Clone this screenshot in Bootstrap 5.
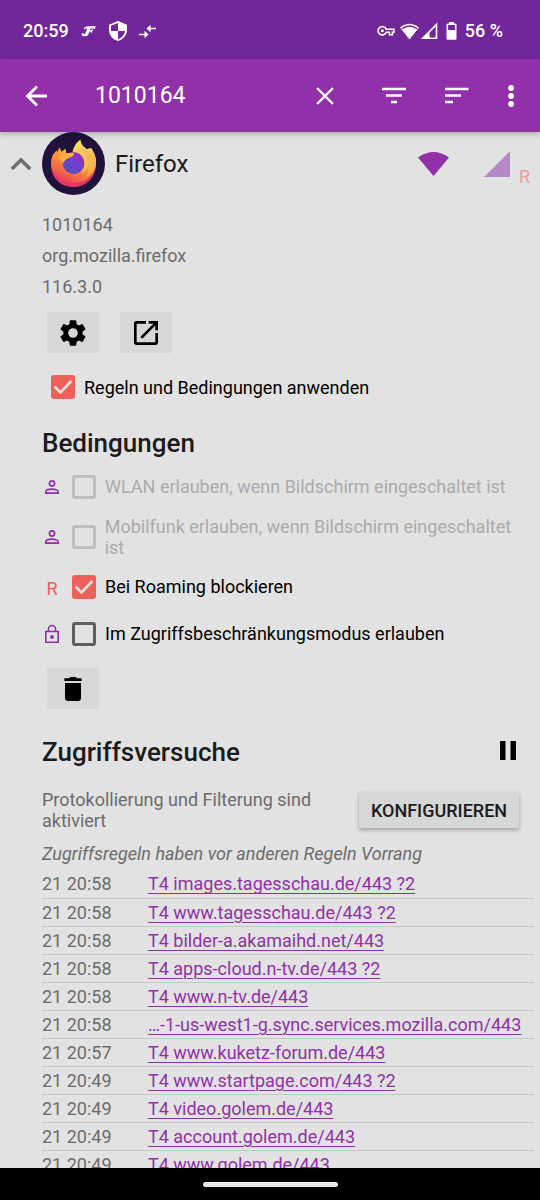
<!DOCTYPE html>
<html lang="de">
<head>
<meta charset="utf-8">
<meta name="viewport" content="width=device-width, initial-scale=1">
<title>Firefox – Regeln</title>
<link href="https://cdn.jsdelivr.net/npm/bootstrap@5.3.0/dist/css/bootstrap.min.css" rel="stylesheet">
<style>
  :root { --plum: #9130a8; --plum-dark: #71269a; --coral: #ee6059; --ground: #e2e2e2; --muted: #6c6c6c; }
  body { font-family: Roboto, sans-serif; font-size: 18px; line-height: 21px; background: var(--ground); color: #000; }
  svg { display: block; flex: none; }
  .status { height: 59px; background: var(--plum-dark); font-weight: 500; padding: 2px 37px 0 23px; }
  .status-left { gap: 12px; }
  .appbar { height: 73px; background: var(--plum); box-shadow: 0 2px 6px rgba(0,0,0,.25); padding: 0 23px 0 24px; z-index: 1; }
  .appbar button, .plain { background: none; border: 0; padding: 0; color: inherit; }
  .actions { gap: 39px; margin-right: -1px; }
  .actions button:first-child { margin-right: 8px; }
  .search { flex: 1 1 0; min-width: 0; background: none; border: 0; padding: 0; margin-left: 46px; color: #fff; font-size: 23px; outline: 0; }
  .page { min-height: 0; }
  .app-row { height: 63px; padding: 0 10px; }
  .app-name { font-size: 24px; line-height: 30px; color: #1b1b1b; }
  .app-title { gap: 10px; }
  .networks { gap: 34px; }
  .details { padding: 0 6px 0 42px; }
  .facts { color: var(--muted); line-height: 31px; margin: 14px 0 10px; }
  .tool { width: 52px; height: 41px; border: 0; padding: 0; border-radius: 2px; background: #d6d8d7; display: grid; place-items: center; }
  .tools { gap: 21px; padding-left: 5px; }
  .apply-row { padding: 22px 0 28px 9px; }
  .section-title { font-size: 26px; line-height: 32px; font-weight: 500; color: #1b1b1b; margin: 0; }
  .rules { padding: 4px 6px 11px 0; }
  .rule { min-height: 47px; }
  .rule-tall { min-height: 53px; }
  .rule-icon { width: 20px; margin-right: 10px; display: grid; place-items: center; }
  .tick { appearance: none; flex: none; width: 24px; height: 24px; margin: 0; border: 3px solid #5e5e5e; border-radius: 3px; }
  .tick:checked { border: 0; background: var(--coral) url("data:image/svg+xml,%3Csvg xmlns='http://www.w3.org/2000/svg' viewBox='0 0 24 24'%3E%3Cpath d='M3.500 11.500l6 6L20.500 6' fill='none' stroke='%23e8e2e2' stroke-width='2.600'/%3E%3C/svg%3E"); }
  .tick:disabled { border-color: #bdbdbd; }
  .tick:disabled + label { color: #ababab; }
  .tick + label { margin-left: 9px; }
  .coral { color: var(--coral); }
  .attempts-head { padding: 27px 17px 21px 0; }
  .attempts-head button { margin-bottom: 4px; }
  .attempts-info { padding-right: 15px; }
  .configure { width: 160px; height: 36px; border: 0; padding: 0; border-radius: 2px; background: #d6d8d7; color: #1b1b1b; font-weight: 500; box-shadow: 0 2px 4px rgba(0,0,0,.3); }
  .note { color: var(--muted); }
  .precedence { margin: 12px 0 6px; }
  .log { width: 100%; table-layout: fixed; color: var(--muted); }
  .log td { padding: 0; height: 28px; line-height: 27px; border-bottom: 1px solid #c5c5c5; white-space: nowrap; }
  .log td:first-child { width: 106px; }
  .log a { color: var(--plum); text-decoration-thickness: 1px; text-underline-offset: 3px; }
  .gesture { height: 32px; background: #000; z-index: 1; }
  .gesture span { width: 25%; height: 5px; background: #e8e8e8; border-radius: 3px; }
</style>
</head>
<body>
<div class="d-flex flex-column vh-100 overflow-hidden">
  <div class="status d-flex align-items-center text-white flex-shrink-0">
    <div class="status-left d-flex align-items-center">
      <span>20:59</span>
      <svg width="16" height="12" viewBox="0 0 20 14" aria-hidden="true"><path d="M3.500 4.500C4 2 6 1 9 1h9.500l-1.200 3.800-1.500-1h-4L11 6h1.500l1-1.200H15l-1.500 4.400H12V8h-1.500l-1 2.700C8.800 12.600 7 13.500 4.500 13.500 2 13.500.8 12.600.8 11.300c0-1 .8-1.600 1.700-1.600.9 0 1.500.5 1.500 1.300 1 0 1.400-.6 1.700-1.500L7.700 3.800H6c-.8 0-1.200.6-1.500 1.400z" fill="#fff"/></svg>
      <svg width="18" height="20" viewBox="3 1 18 22" preserveAspectRatio="none" aria-hidden="true"><path d="M12 1L3 5v6c0 5.550 3.840 10.740 9 12 5.160-1.260 9-6.450 9-12V5zm0 10.990h7c-.53 4.120-3.280 7.790-7 8.940V12H5V6.300l7-3.110z" fill="#fff"/></svg>
      <svg width="18" height="14" viewBox="4 2 18 14" aria-hidden="true"><path d="M4 12.500h7M14 6.500h7" stroke="#fff" stroke-width="1.600"/><path d="M9.500 8.800l4 3.700-4 3.700zM15.500 2.800l-4 3.700 4 3.700z" fill="#fff"/></svg>
    </div>
    <svg class="ms-auto" width="18" height="12" viewBox="0 0 18 12" aria-hidden="true"><path d="M9.200 4.200h7.700v3h-1.500v2.600h-3V7.200H9.200A4.200 4.200 0 1 1 9.200 4.200z" fill="none" stroke="#fff" stroke-width="1.600"/><circle cx="5.400" cy="5.700" r="1.500" fill="#fff"/></svg>
    <svg class="ms-1" width="21" height="18" viewBox="0 0 21 18" aria-hidden="true"><path d="M1 5.500Q10.500-2 20 5.500L10.500 17.500z" fill="#fff"/><path d="M2.800 6.800q7.700-5.600 15.400 0" stroke="#71269a" stroke-width="1.300" fill="none"/></svg>
    <svg width="18" height="18" viewBox="0 0 18 18" aria-hidden="true"><path d="M16.500 2.500v13.700H2.800z" fill="none" stroke="#fff" stroke-width="1.600"/><path d="M9.500 9.500v7H2z" fill="#fff"/></svg>
    <svg class="ms-2 me-2" width="11" height="18" viewBox="0 0 11 18" aria-hidden="true"><path d="M3 0h5v2H3z" fill="#fff"/><rect x="1.300" y="2.300" width="8.400" height="14.700" rx=".5" fill="none" stroke="#fff" stroke-width="1.600"/><path d="M1 8h9v9H1z" fill="#fff"/></svg>
    <span>56 %</span>
  </div>

  <header class="appbar d-flex align-items-center text-white flex-shrink-0 position-relative">
    <button type="button" aria-label="Zurück"><svg width="25" height="24" viewBox="0 0 25 24"><path d="M23 12H4M13 2.500L3.500 12l9.500 9.500" fill="none" stroke="#fff" stroke-width="2.800"/></svg></button>
    <input class="search" type="text" value="1010164" aria-label="Suche">
    <div class="actions d-flex align-items-center">
      <button type="button" aria-label="Suche leeren"><svg width="20" height="20" viewBox="0 0 20 20"><path d="M2 2l16 16M18 2L2 18" stroke="#fff" stroke-width="2.400"/></svg></button>
      <button type="button" aria-label="Filtern"><svg width="24" height="18" viewBox="0 0 24 18"><path d="M0 2h24M4 8.500h16M9 15h6" stroke="#fff" stroke-width="2.600"/></svg></button>
      <button type="button" aria-label="Sortieren"><svg width="24" height="18" viewBox="0 0 24 18"><path d="M0 2h23.500M0 8.500h16M0 15h8" stroke="#fff" stroke-width="2.600"/></svg></button>
      <button type="button" class="pe-1" aria-label="Mehr"><svg width="6" height="22" viewBox="3 0 6 22"><g fill="#fff"><circle cx="6" cy="3" r="2.900"/><circle cx="6" cy="11" r="2.900"/><circle cx="6" cy="19" r="2.900"/></g></svg></button>
    </div>
  </header>

  <main class="page flex-fill overflow-hidden">
    <div class="app-row d-flex align-items-center">
      <div class="app-title d-flex align-items-center me-auto">
        <button type="button" class="plain" aria-label="Einklappen"><svg width="22" height="14" viewBox="0 0 22 14"><path d="M1.800 12L11 3l9.200 9" fill="none" stroke="#6e6e6e" stroke-width="3.400"/></svg></button>
        <svg width="63" height="63" viewBox="0 0 63 63" role="img" aria-label="Firefox-Logo">
          <defs>
            <linearGradient id="flame" x1=".9" y1=".1" x2=".35" y2="1"><stop offset="0" stop-color="#ffd84d"/><stop offset=".4" stop-color="#fba23c"/><stop offset=".75" stop-color="#f56b3f"/><stop offset="1" stop-color="#ea3f5c"/></linearGradient>
            <linearGradient id="tail" x1=".3" y1="0" x2=".7" y2="1"><stop offset="0" stop-color="#ffe95a"/><stop offset=".3" stop-color="#f1c36a"/><stop offset="1" stop-color="#fda63f"/></linearGradient>
            <linearGradient id="globe" x1=".9" y1=".1" x2=".2" y2=".9"><stop offset="0" stop-color="#a028bd"/><stop offset=".5" stop-color="#6f3fce"/><stop offset="1" stop-color="#5350c0"/></linearGradient>
          </defs>
          <circle cx="31.500" cy="31.500" r="31.500" fill="#20123a"/>
          <path d="M9 32c0-6 2-10 6-13.500V21l2.500-5.500 2 4.500 4-3.200.7 4.200H31l18-5c3.500 5 5 9 5 16 0 13-9.500 23-22.500 23S9 46 9 32z" fill="#e53467"/>
          <path d="M9 31c0-5.500 2-9.500 6-12.500V21l2.500-5.500 2 4.500 4-3.200.7 4.200H31l18-5c3.500 5 5 9 5 14 0 12-9.500 21-22.500 21S9 42 9 31z" fill="url(#flame)"/>
          <path d="M30.500 20.500c1-6 4-10 8-13 .5 4.500 2 6 5 8.500 2 1.500 3.500 3.500 5 5.500v-5.500c3.500 4 5.500 9 5.500 14 0 7-3.500 12-9.500 15 3-7 2-15-3-20-3-3-7-4-11-4.500z" fill="url(#tail)"/>
          <circle cx="31.500" cy="31" r="10.800" fill="url(#globe)"/>
          <path d="M16 26c3-3 5-2 8-4 2.500-1.500 6-1.500 8-1 0 2-1 3.500-4 4.500-3.500 1-6 3-6.500 6-1-3-3-4.500-5.500-5.500z" fill="#fdb040"/>
          <path d="M38 22c6 5 7 13 1 19 7-2 9-10 5-15-1-2-3-3.500-6-4z" fill="#fdc448"/>
        </svg>
        <span class="app-name">Firefox</span>
      </div>
      <div class="networks d-flex align-items-center">
        <svg width="31" height="26" viewBox="0 0 31 26" role="img" aria-label="WLAN"><path d="M0 6.500Q15.500-4.500 31 6.500L15.500 25z" fill="#9130a8"/></svg>
        <svg width="28" height="28" viewBox="0 0 28 28" role="img" aria-label="Mobilfunk"><path d="M27 1v26H1z" fill="#b587c8"/></svg>
      </div>
      <span class="coral opacity-50 align-self-end pb-2 ms-2">R</span>
    </div>

    <div class="details">
      <div class="facts"><div>1010164</div><div>org.mozilla.firefox</div><div>116.3.0</div></div>
      <div class="tools d-flex">
        <button type="button" class="tool" aria-label="Einstellungen"><svg width="32" height="32" viewBox="0 0 24 24"><path d="M19.140 12.940c.04-.3.060-.61.060-.94 0-.32-.02-.64-.07-.94l2.030-1.580a.49.49 0 0 0 .12-.61l-1.920-3.320a.49.49 0 0 0-.59-.22l-2.390.96c-.5-.38-1.030-.7-1.620-.94l-.36-2.540a.48.48 0 0 0-.48-.41h-3.840c-.24 0-.43.17-.47.41l-.36 2.540c-.59.24-1.130.57-1.620.94l-2.390-.96a.48.48 0 0 0-.59.22L2.740 8.870c-.12.21-.08.470.12.610l2.030 1.580c-.05.3-.09.63-.09.94s.02.640.07.940l-2.030 1.580a.49.49 0 0 0-.12.610l1.920 3.320c.12.220.37.290.59.220l2.390-.96c.5.380 1.030.7 1.620.94l.36 2.540c.05.240.24.410.48.410h3.840c.24 0 .44-.17.470-.41l.36-2.540c.59-.24 1.130-.56 1.620-.94l2.390.96c.22.080.47 0 .59-.22l1.920-3.320a.48.480 0 0 0-.12-.61zM12 15.600A3.600 3.600 0 1 1 12 8.400a3.600 3.600 0 0 1 0 7.200z"/></svg></button>
        <button type="button" class="tool" aria-label="App öffnen"><svg width="32" height="32" viewBox="0 0 24 24"><path d="M19 19H5V5h7V3H5a2 2 0 0 0-2 2v14a2 2 0 0 0 2 2h14c1.100 0 2-.9 2-2v-7h-2zM14 3v2h3.590l-9.830 9.830 1.410 1.410L19 6.410V10h2V3z"/></svg></button>
      </div>
      <div class="apply-row d-flex align-items-center">
        <input class="tick" type="checkbox" id="apply" checked><label for="apply">Regeln und Bedingungen anwenden</label>
      </div>

      <h2 class="section-title">Bedingungen</h2>
      <div class="rules">
        <div class="rule d-flex align-items-center">
          <span class="rule-icon"><svg width="16" height="16" viewBox="0 0 16 16"><circle cx="8" cy="4.500" r="2.600" fill="none" stroke="#9130a8" stroke-width="1.700"/><path d="M1.800 14.200v-1.500C1.800 11 5.500 10.200 8 10.200s6.200.8 6.200 2.500v1.500z" fill="none" stroke="#9130a8" stroke-width="1.700"/></svg></span>
          <input class="tick" type="checkbox" id="wlan" disabled><label for="wlan">WLAN erlauben, wenn Bildschirm eingeschaltet ist</label>
        </div>
        <div class="rule rule-tall d-flex align-items-center">
          <span class="rule-icon"><svg width="16" height="16" viewBox="0 0 16 16"><circle cx="8" cy="4.500" r="2.600" fill="none" stroke="#9130a8" stroke-width="1.700"/><path d="M1.800 14.200v-1.500C1.800 11 5.500 10.200 8 10.200s6.200.8 6.200 2.500v1.500z" fill="none" stroke="#9130a8" stroke-width="1.700"/></svg></span>
          <input class="tick" type="checkbox" id="mobile" disabled><label for="mobile">Mobilfunk erlauben, wenn Bildschirm eingeschaltet ist</label>
        </div>
        <div class="rule d-flex align-items-center">
          <span class="rule-icon coral pt-1">R</span>
          <input class="tick" type="checkbox" id="roaming" checked><label for="roaming">Bei Roaming blockieren</label>
        </div>
        <div class="rule d-flex align-items-center">
          <span class="rule-icon"><svg width="16" height="20" viewBox="0 0 16 20"><path d="M1.800 7.500h12.400v10.700H1.800zM4.500 7.500V5a3.500 3.500 0 0 1 7 0v2.500" fill="none" stroke="#9130a8" stroke-width="1.600"/><circle cx="8" cy="13" r="1.900" fill="#9130a8"/></svg></span>
          <input class="tick" type="checkbox" id="lockdown"><label for="lockdown">Im Zugriffsbeschränkungsmodus erlauben</label>
        </div>
      </div>
      <div class="tools d-flex">
        <button type="button" class="tool" aria-label="Löschen"><svg width="32" height="32" viewBox="0 0 24 24"><path d="M6 19c0 1.100.9 2 2 2h8c1.100 0 2-.9 2-2V7.500H6zM18.500 4H15l-1-1h-4L9 4H5.500v2h13z"/></svg></button>
      </div>

      <div class="attempts-head d-flex align-items-center justify-content-between">
        <h2 class="section-title">Zugriffsversuche</h2>
        <button type="button" class="plain" aria-label="Pause"><svg width="18" height="19" viewBox="0 0 18 19"><path d="M1 0h5.500v19H1zM11.500 0H17v19h-5.500z"/></svg></button>
      </div>
      <div class="attempts-info d-flex align-items-center">
        <span class="note flex-fill pe-3">Protokollierung und Filterung sind aktiviert</span>
        <button type="button" class="configure flex-shrink-0">KONFIGURIEREN</button>
      </div>
      <div class="note precedence fst-italic">Zugriffsregeln haben vor anderen Regeln Vorrang</div>
      <table class="log">
        <tbody>
        <tr><td>21 20:58</td><td><a href="#">T4 images.tagesschau.de/443 ?2</a></td></tr>
        <tr><td>21 20:58</td><td><a href="#">T4 www.tagesschau.de/443 ?2</a></td></tr>
        <tr><td>21 20:58</td><td><a href="#">T4 bilder-a.akamaihd.net/443</a></td></tr>
        <tr><td>21 20:58</td><td><a href="#">T4 apps-cloud.n-tv.de/443 ?2</a></td></tr>
        <tr><td>21 20:58</td><td><a href="#">T4 www.n-tv.de/443</a></td></tr>
        <tr><td>21 20:58</td><td><a href="#">…-1-us-west1-g.sync.services.mozilla.com/443</a></td></tr>
        <tr><td>21 20:57</td><td><a href="#">T4 www.kuketz-forum.de/443</a></td></tr>
        <tr><td>21 20:49</td><td><a href="#">T4 www.startpage.com/443 ?2</a></td></tr>
        <tr><td>21 20:49</td><td><a href="#">T4 video.golem.de/443</a></td></tr>
        <tr><td>21 20:49</td><td><a href="#">T4 account.golem.de/443</a></td></tr>
        <tr><td>21 20:49</td><td><a href="#">T4 www.golem.de/443</a></td></tr>
        </tbody>
      </table>
    </div>
  </main>

  <div class="gesture d-flex align-items-center justify-content-center flex-shrink-0"><span></span></div>
</div>
<script src="https://cdn.jsdelivr.net/npm/bootstrap@5.3.0/dist/js/bootstrap.bundle.min.js"></script>
</body>
</html>
